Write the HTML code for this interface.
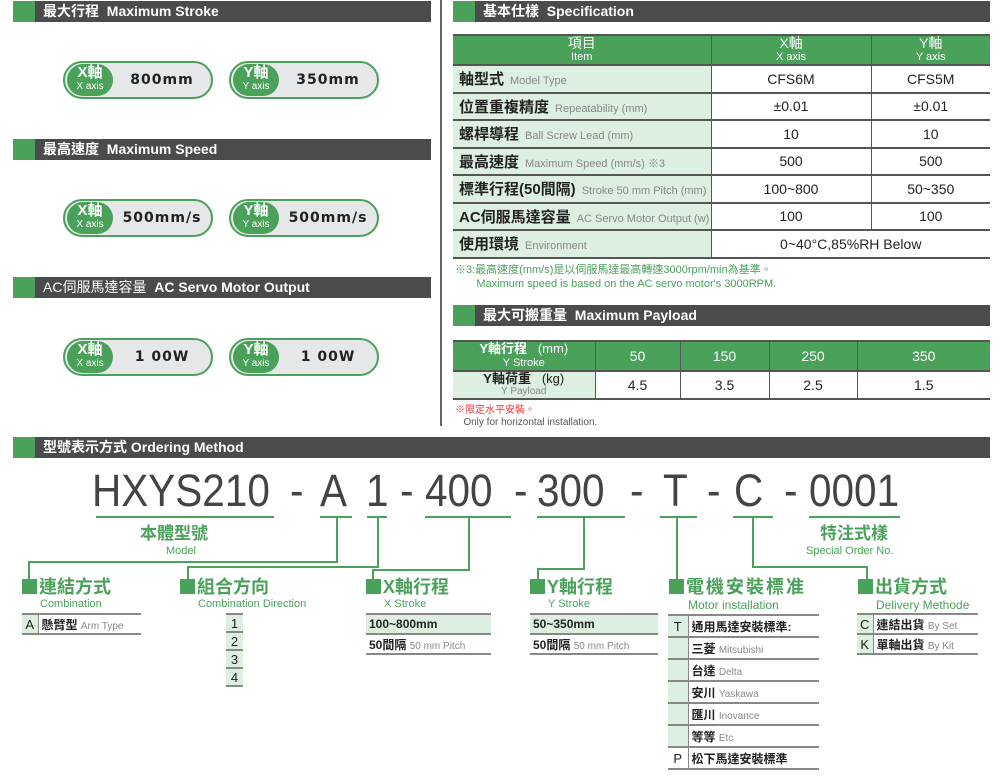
<!DOCTYPE html>
<html><head><meta charset="utf-8"><style>
*{margin:0;padding:0;box-sizing:border-box}
body{width:1000px;height:778px;background:#fff;position:relative;overflow:hidden;font-family:"Liberation Sans","Noto Sans CJK TC",sans-serif;color:#222}
.a{position:absolute}
.bar{position:absolute;height:21px;background:#4a4b4d;border-left:22px solid #4aa15a;color:#fff;font-weight:bold;font-size:14px;line-height:21px;padding-left:8px;white-space:nowrap}
.pill{position:absolute;width:150px;height:38px;border:2px solid #4aa15a;border-radius:19px;background:#e6e7e8}
.pill .c{position:absolute;left:2px;top:1px;width:46px;height:32px;border-radius:16px;background:#4aa15a;color:#fff;text-align:center;font-weight:bold;font-size:15px;line-height:17px}
.pill .c small{display:block;font-size:10px;font-weight:normal;line-height:11px}
.pill .v{position:absolute;left:50px;top:0;width:94px;line-height:34px;text-align:center;font-weight:bold;font-size:14px;letter-spacing:1px;font-family:"DejaVu Sans","Liberation Sans",sans-serif}
table{border-collapse:collapse;position:absolute}
.spec td{border-bottom:2px solid #555;height:27.5px;font-size:14px;text-align:center;padding:0}
.spec td+td{border-left:1px solid #555}
.spec .it{background:#dcefe0;text-align:left;padding-left:6px;font-weight:bold;font-size:15px;white-space:nowrap}
.spec .it span{font-weight:normal;font-size:11px;color:#888;margin-left:6px}
.hd td{background:#4aa15a;color:#fff;font-size:14px;line-height:14px;height:30px}
.hd td small{display:block;font-size:11px;font-weight:normal}
.g{color:#4aa15a}
.h{position:absolute;color:#4aa15a;font-weight:bold;font-size:18px;white-space:nowrap;line-height:20px}
.h i{display:inline-block;width:15px;height:15px;background:#4aa15a;vertical-align:-1px;margin-right:2px}
.s{position:absolute;color:#4aa15a;font-size:11px;white-space:nowrap}
.ln{position:absolute;background:#4aa15a}
.ot td{border-bottom:2px solid #888;font-size:12px;font-weight:bold;height:20px;padding:0 3px;white-space:nowrap}
.ot td span{font-weight:normal;color:#888;font-size:10px}
.ot .k{background:#dcefe0;text-align:center;border-right:1px solid #888;font-weight:normal;font-size:13px}
.m{position:absolute;top:466px;font-size:45px;line-height:50px;color:#444;white-space:nowrap;transform:scaleX(0.9);transform-origin:left}
</style></head><body>

<div class="a" style="left:440px;top:0;width:2px;height:426px;background:#666"></div>

<div class="bar" style="left:13px;top:1px;width:418px">最大行程&nbsp; Maximum Stroke</div>
<div class="pill" style="left:63px;top:61px"><div class="c">X軸<small>X axis</small></div><div class="v">800mm</div></div>
<div class="pill" style="left:229px;top:61px"><div class="c">Y軸<small>Y axis</small></div><div class="v">350mm</div></div>

<div class="bar" style="left:13px;top:139px;width:418px">最高速度&nbsp; Maximum Speed</div>
<div class="pill" style="left:63px;top:199px"><div class="c">X軸<small>X axis</small></div><div class="v">500mm/s</div></div>
<div class="pill" style="left:229px;top:199px"><div class="c">Y軸<small>Y axis</small></div><div class="v">500mm/s</div></div>

<div class="bar" style="left:13px;top:277px;width:418px"><span style="font-weight:normal">AC伺服馬達容量</span>&nbsp; AC Servo Motor Output</div>
<div class="pill" style="left:63px;top:338px"><div class="c">X軸<small>X axis</small></div><div class="v">1 00W</div></div>
<div class="pill" style="left:229px;top:338px"><div class="c">Y軸<small>Y axis</small></div><div class="v">1 00W</div></div>

<div class="bar" style="left:453px;top:1px;width:537px">基本仕樣&nbsp; Specification</div>
<table class="spec" style="left:453px;top:34px;width:537px;border-top:2px solid #555">
<tr class="hd"><td style="width:258px">項目<small>Item</small></td><td style="width:160px">X軸<small>X axis</small></td><td>Y軸<small>Y axis</small></td></tr>
<tr><td class="it">軸型式<span>Model Type</span></td><td>CFS6M</td><td>CFS5M</td></tr>
<tr><td class="it">位置重複精度<span>Repeatability (mm)</span></td><td>±0.01</td><td>±0.01</td></tr>
<tr><td class="it">螺桿導程<span>Ball Screw Lead (mm)</span></td><td>10</td><td>10</td></tr>
<tr><td class="it">最高速度<span>Maximum Speed (mm/s) ※3</span></td><td>500</td><td>500</td></tr>
<tr><td class="it">標準行程(50間隔)<span>Stroke 50 mm Pitch (mm)</span></td><td>100~800</td><td>50~350</td></tr>
<tr><td class="it">AC伺服馬達容量<span>AC Servo Motor Output (w)</span></td><td>100</td><td>100</td></tr>
<tr><td class="it">使用環境<span>Environment</span></td><td colspan="2">0~40°C,85%RH Below</td></tr>
</table>
<div class="a g" style="left:455px;top:263px;font-size:11px;line-height:14px">※3:最高速度(mm/s)是以伺服馬達最高轉速3000rpm/min為基準。<br>&nbsp;&nbsp;&nbsp;&nbsp;&nbsp;&nbsp;&nbsp;Maximum speed is based on the AC servo motor's 3000RPM.</div>

<div class="bar" style="left:453px;top:305px;width:537px">最大可搬重量&nbsp; Maximum Payload</div>
<table class="spec" style="left:453px;top:340px;width:537px;border-top:2px solid #555">
<tr class="hd"><td style="width:142px;font-size:13px;font-weight:bold">Y軸行程 &nbsp;&nbsp;<span style="font-weight:normal">(mm)</span><small>Y Stroke</small></td><td style="width:85px">50</td><td style="width:89px">150</td><td style="width:88px">250</td><td>350</td></tr>
<tr><td style="background:#dcefe0;font-weight:bold;font-size:13px;line-height:13px">Y軸荷重 &nbsp;&nbsp;<span style="font-weight:normal">(kg)</span><small style="display:block;font-size:10px;font-weight:normal;color:#888">Y Payload</small></td><td>4.5</td><td>3.5</td><td>2.5</td><td>1.5</td></tr>
</table>
<div class="a" style="left:455px;top:405px;font-size:10px;line-height:12px;color:#e33">※限定水平安裝。<br><span style="color:#555">&nbsp;&nbsp;&nbsp;Only for horizontal installation.</span></div>

<div class="bar" style="left:13px;top:437px;width:977px;font-size:14px">型號表示方式 Ordering Method</div>

<div class="m" style="left:92px">HXYS210</div>
<div class="m" style="left:290px">-</div>
<div class="m" style="left:320px">A</div>
<div class="m" style="left:366px">1</div>
<div class="m" style="left:400px">-</div>
<div class="m" style="left:425px">400</div>
<div class="m" style="left:514px">-</div>
<div class="m" style="left:537px">300</div>
<div class="m" style="left:630px">-</div>
<div class="m" style="left:663px">T</div>
<div class="m" style="left:707px">-</div>
<div class="m" style="left:734px">C</div>
<div class="m" style="left:784px">-</div>
<div class="m" style="left:809px">0001</div>
<div class="ln" style="left:96px;top:516px;width:178px;height:2px"></div>
<div class="ln" style="left:320px;top:516px;width:32px;height:2px"></div>
<div class="ln" style="left:367px;top:516px;width:20px;height:2px"></div>
<div class="ln" style="left:425px;top:516px;width:86px;height:2px"></div>
<div class="ln" style="left:537px;top:516px;width:88px;height:2px"></div>
<div class="ln" style="left:660px;top:516px;width:37px;height:2px"></div>
<div class="ln" style="left:733px;top:516px;width:40px;height:2px"></div>
<div class="ln" style="left:809px;top:516px;width:91px;height:2px"></div>
<div class="h" style="left:140px;top:524px;font-size:17px">本體型號</div>
<div class="s" style="left:166px;top:545px">Model</div>
<div class="h" style="left:820px;top:524px;font-size:17px">特注式樣</div>
<div class="s" style="left:806px;top:545px">Special Order No.</div>

<div class="ln" style="left:336px;top:518px;width:2px;height:45px"></div>
<div class="ln" style="left:28px;top:561px;width:310px;height:2px"></div>
<div class="ln" style="left:28px;top:561px;width:2px;height:18px"></div>
<div class="ln" style="left:377px;top:518px;width:2px;height:50px"></div>
<div class="ln" style="left:187px;top:566px;width:192px;height:2px"></div>
<div class="ln" style="left:187px;top:566px;width:2px;height:13px"></div>
<div class="ln" style="left:468px;top:518px;width:2px;height:53px"></div>
<div class="ln" style="left:372px;top:569px;width:98px;height:2px"></div>
<div class="ln" style="left:372px;top:569px;width:2px;height:10px"></div>
<div class="ln" style="left:583px;top:518px;width:2px;height:52px"></div>
<div class="ln" style="left:537px;top:568px;width:48px;height:2px"></div>
<div class="ln" style="left:537px;top:568px;width:2px;height:11px"></div>
<div class="ln" style="left:676px;top:518px;width:2px;height:61px"></div>
<div class="ln" style="left:752px;top:518px;width:2px;height:50px"></div>
<div class="ln" style="left:752px;top:566px;width:115px;height:2px"></div>
<div class="ln" style="left:866px;top:566px;width:2px;height:13px"></div>

<div class="h" style="left:22px;top:577px"><i></i>連結方式</div>
<div class="s" style="left:40px;top:598px">Combination</div>
<table class="ot" style="left:22px;top:613px;width:119px;border-top:2px solid #888"><tr><td class="k" style="width:16px;padding:0">A</td><td>懸臂型 <span>Arm Type</span></td></tr></table>

<div class="h" style="left:180px;top:577px"><i></i>組合方向</div>
<div class="s" style="left:198px;top:598px">Combination Direction</div>
<table class="ot" style="left:226px;top:613px;width:17px;border-top:2px solid #888">
<tr><td class="k" style="border-right:0;padding:0;height:18px">1</td></tr><tr><td class="k" style="border-right:0;padding:0;height:18px">2</td></tr><tr><td class="k" style="border-right:0;padding:0;height:18px">3</td></tr><tr><td class="k" style="border-right:0;padding:0;height:18px">4</td></tr></table>

<div class="h" style="left:366px;top:577px"><i></i>X軸行程</div>
<div class="s" style="left:384px;top:598px">X Stroke</div>
<table class="ot" style="left:366px;top:613px;width:125px;border-top:2px solid #888">
<tr><td style="background:#dcefe0">100~800mm</td></tr><tr><td>50間隔 <span>50 mm Pitch</span></td></tr></table>

<div class="h" style="left:530px;top:577px"><i></i>Y軸行程</div>
<div class="s" style="left:548px;top:598px">Y Stroke</div>
<table class="ot" style="left:530px;top:613px;width:128px;border-top:2px solid #888">
<tr><td style="background:#dcefe0">50~350mm</td></tr><tr><td>50間隔 <span>50 mm Pitch</span></td></tr></table>

<div class="h" style="left:669px;top:577px;letter-spacing:2px"><i></i>電機安裝標准</div>
<div class="s" style="left:688px;top:598px;font-size:12px">Motor installation</div>
<table class="ot" style="left:668px;top:614px;width:151px;border-top:2px solid #888">
<tr><td class="k" style="width:20px;height:22px">T</td><td>通用馬達安裝標準:</td></tr>
<tr><td class="k" style="height:22px"></td><td>三菱 <span>Mitsubishi</span></td></tr>
<tr><td class="k" style="height:22px"></td><td>台達 <span>Delta</span></td></tr>
<tr><td class="k" style="height:22px"></td><td>安川 <span>Yaskawa</span></td></tr>
<tr><td class="k" style="height:22px"></td><td>匯川 <span>Inovance</span></td></tr>
<tr><td class="k" style="height:22px"></td><td>等等 <span>Etc</span></td></tr>
<tr><td class="k" style="height:22px;background:#fff">P</td><td>松下馬達安裝標準</td></tr>
</table>

<div class="h" style="left:858px;top:577px"><i></i>出貨方式</div>
<div class="s" style="left:876px;top:598px;font-size:12px">Delivery Methode</div>
<table class="ot" style="left:857px;top:613px;width:121px;border-top:2px solid #888">
<tr><td class="k" style="width:16px;padding:0">C</td><td>連結出貨 <span>By Set</span></td></tr>
<tr><td class="k" style="padding:0">K</td><td>單軸出貨 <span>By Kit</span></td></tr></table>

</body></html>
